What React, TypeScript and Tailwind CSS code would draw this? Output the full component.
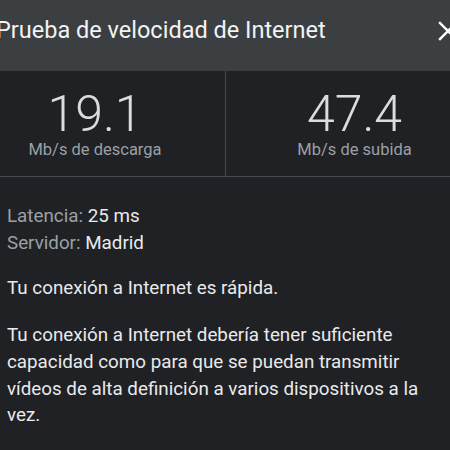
import { Fragment } from "react";

const stats = [
  { value: "19.1", label: "Mb/s de descarga" },
  { value: "47.4", label: "Mb/s de subida" },
];

const details = [
  { label: "Latencia:", value: "25 ms" },
  { label: "Servidor:", value: "Madrid" },
];

export default function App() {
  return (
    <main
      className="h-[450px] w-[450px] overflow-hidden bg-[#202124]"
      style={{ fontFamily: "Roboto, 'Noto Sans', sans-serif" }}
    >
      <div className="ml-[-35px] w-[518px]">
        <header className="flex h-[71px] items-center justify-between bg-[#3c3f42] pb-[10px] pl-[31px] pr-[28px]">
          <h1 className="text-[23.5px] font-normal text-[#f1f3f4]">
            Prueba de velocidad de Internet
          </h1>
          <svg
            width="20"
            height="20"
            viewBox="0 0 20 20"
            className="mr-[-3px] text-white"
          >
            <path
              d="M2 2 L18 18 M18 2 L2 18"
              stroke="currentColor"
              strokeWidth="2.4"
              strokeLinecap="square"
            />
          </svg>
        </header>

        <section className="grid h-[106px] grid-cols-[260px_1px_257px] border-b border-[#45484c]">
          {stats.map((stat, i) => (
            <Fragment key={stat.label}>
              {i > 0 && <div className="bg-[#45484c]" />}
              <div className="flex flex-col items-center pt-[21px]">
                <span className="text-[50px] font-light leading-[44px] text-[#dadce0]">
                  {stat.value}
                </span>
                <span className="mt-[4px] text-[16.5px] leading-[20px] text-[#9aa0a6]">
                  {stat.label}
                </span>
              </div>
            </Fragment>
          ))}
        </section>

        <div className="pl-[42px] pr-[40px] pt-[26px] text-[18.8px] leading-[26.7px] text-[#e8eaed]">
          {details.map((d) => (
            <p key={d.label}>
              <span className="text-[#9aa0a6]">{d.label}</span> {d.value}
            </p>
          ))}

          <p className="mt-[19px]">Tu conexión a Internet es rápida.</p>

          <p className="mt-[20px] w-[440px]">
            Tu conexión a Internet debería tener suficiente capacidad como para
            que se puedan transmitir vídeos de alta definición a varios
            dispositivos a la vez.
          </p>
        </div>
      </div>
    </main>
  );
}
